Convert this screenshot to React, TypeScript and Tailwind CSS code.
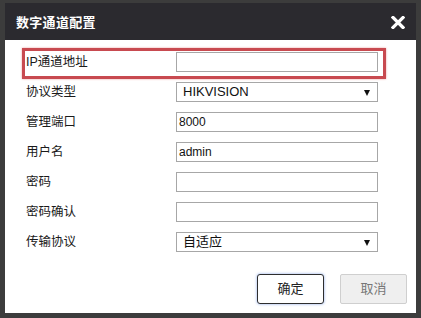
import { ReactNode } from 'react';

const font = { fontFamily: '"Liberation Sans", Arial, "Noto Sans CJK SC", sans-serif' };

const Arrow = () => (
  <svg width="6" height="6" viewBox="0 0 6 6" className="absolute right-[7px] top-[7px]">
    <polygon points="0,0 6,0 3,6" fill="#111" />
  </svg>
);

const Field = ({ value = '', select = false }: { value?: string; select?: boolean }) => (
  <div className="relative flex h-[20px] w-[202px] items-center border border-[#a7a7a7] bg-white pl-[2px] text-[12px] text-[#111]">
    <span className={select ? 'pl-[4px] text-[13px]' : ''}>{value}</span>
    {select && <Arrow />}
  </div>
);

const Row = ({ label, children, className = '' }: { label: string; children: ReactNode; className?: string }) => (
  <div className={`flex h-[20px] items-center ${className}`}>
    <span className="w-[150px] text-[12.5px] text-[#1a1a1a]">{label}</span>
    {children}
  </div>
);

export default function App() {
  return (
    <div className="h-[318px] w-[421px] overflow-hidden bg-[#3c3c3c] pl-[5px] pt-[3px]" style={font}>
      <div className="w-[411px]">
        <div className="flex h-[37px] items-center justify-between bg-[#2b2a2f] pl-[11px] pr-[11px] pt-[2px]">
          <span className="text-[13px] font-bold tracking-[0.3px] text-white">数字通道配置</span>
          <svg width="14" height="13" viewBox="0 0 14 13">
            <path d="M2 1.5 L12 11.5 M12 1.5 L2 11.5" stroke="#fff" strokeWidth="3.2" strokeLinecap="square" />
          </svg>
        </div>
        <div className="h-[273px] bg-white pt-[8px]">
          <div className="ml-[17px] flex h-[31px] w-[364px] items-start border-[3px] border-[#c84a50] pl-[1px] pt-[1px] shadow-[0_0_2px_#e9a0a0]">
            <span className="w-[150px] text-[12.5px] leading-[20px] text-[#1a1a1a]">IP通道地址</span>
            <Field />
          </div>
          <div className="pl-[21px]">
            <Row label="协议类型" className="mt-[3px]">
              <Field value="HIKVISION" select />
            </Row>
            <Row label="管理端口" className="mt-[10px]">
              <Field value="8000" />
            </Row>
            <Row label="用户名" className="mt-[10px]">
              <Field value="admin" />
            </Row>
            <Row label="密码" className="mt-[10px]">
              <Field />
            </Row>
            <Row label="密码确认" className="mt-[10px]">
              <Field />
            </Row>
            <Row label="传输协议" className="mt-[10px]">
              <Field value="自适应" select />
            </Row>
          </div>
          <div className="mr-[9px] mt-[22px] flex justify-end gap-[16px]">
            <button className="h-[30px] w-[67px] rounded-[3px] border border-[#2e2e2e] bg-white text-[13px] text-[#222] shadow-[0_0_3px_#8aa8e8]">
              确定
            </button>
            <button className="h-[30px] w-[67px] rounded-[2px] border border-[#cfcfcf] bg-[#efefef] text-[13px] text-[#777]">
              取消
            </button>
          </div>
        </div>
      </div>
    </div>
  );
}
